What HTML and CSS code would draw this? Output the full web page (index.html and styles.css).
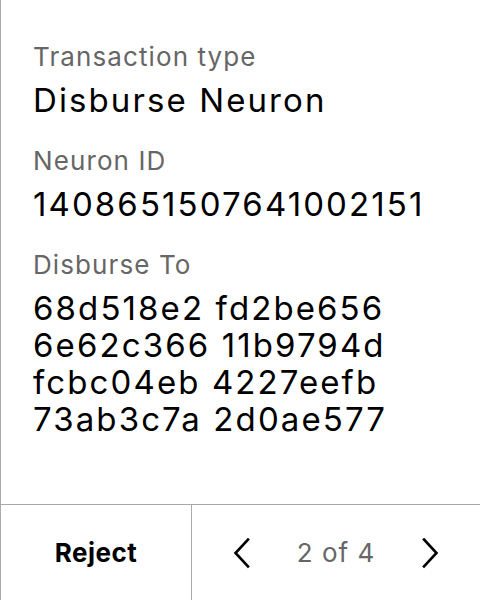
FILE: index.html
```html
<!DOCTYPE html>
<html>
<head>
<meta charset="utf-8">
<link rel="stylesheet" href="styles.css">
</head>
<body>
<div class="screen">
  <main class="content">
    <section class="field">
      <div class="label">Transaction type</div>
      <div class="value">Disburse Neuron</div>
    </section>
    <section class="field">
      <div class="label">Neuron ID</div>
      <div class="value">1408651507641002151</div>
    </section>
    <section class="field">
      <div class="label">Disburse To</div>
      <div class="value">68d518e2 fd2be656<br>6e62c366 11b9794d<br>fcbc04eb 4227eefb<br>73ab3c7a 2d0ae577</div>
    </section>
  </main>
  <footer class="footer">
    <button class="reject">Reject</button>
    <div class="pager">
      <button class="nav" aria-label="Previous">
        <svg width="20" height="32" viewBox="0 0 20 32"><path d="M16 2.5 L3.5 16 L16 29.5" fill="none" stroke="#000" stroke-width="2.6" stroke-linecap="square"/></svg>
      </button>
      <span class="count">2 of 4</span>
      <button class="nav" aria-label="Next">
        <svg width="20" height="32" viewBox="0 0 20 32"><path d="M4 2.5 L16.5 16 L4 29.5" fill="none" stroke="#000" stroke-width="2.6" stroke-linecap="square"/></svg>
      </button>
    </div>
  </footer>
</div>
</body>
</html>
```
FILE: styles.css
```css
html, body {
  margin: 0;
  padding: 0;
  background: #fff;
}
body {
  font-family: Inter, "Noto Sans", sans-serif;
  color: #000;
}
.screen {
  width: 480px;
  height: 600px;
  box-sizing: border-box;
  border-left: 1px solid #aaaaaa;
  display: flex;
  flex-direction: column;
}
.content {
  flex: 1;
  padding: 42px 0 0 32px;
  display: flex;
  flex-direction: column;
  gap: 27px;
}
.label {
  font-size: 26px;
  line-height: 30px;
  letter-spacing: 1.1px;
  color: #666;
  margin-bottom: 10px;
}
.value {
  font-size: 33px;
  line-height: 37px;
  letter-spacing: 2.1px;
  color: #000;
}
.footer {
  height: 96px;
  box-sizing: border-box;
  border-top: 1px solid #aaaaaa;
  display: flex;
}
.reject {
  width: 191px;
  border: none;
  border-right: 1px solid #aaaaaa;
  background: none;
  font-family: inherit;
  font-size: 26px;
  font-weight: 700;
  letter-spacing: 0.5px;
  color: #000;
  padding: 0;
}
.pager {
  flex: 1;
  display: flex;
  align-items: center;
  justify-content: space-between;
  padding: 0 26px;
}
.nav {
  width: 48px;
  height: 48px;
  border: none;
  background: none;
  padding: 0;
  display: flex;
  align-items: center;
  justify-content: center;
}
.count {
  font-size: 26px;
  letter-spacing: 1px;
  color: #666;
}
```
